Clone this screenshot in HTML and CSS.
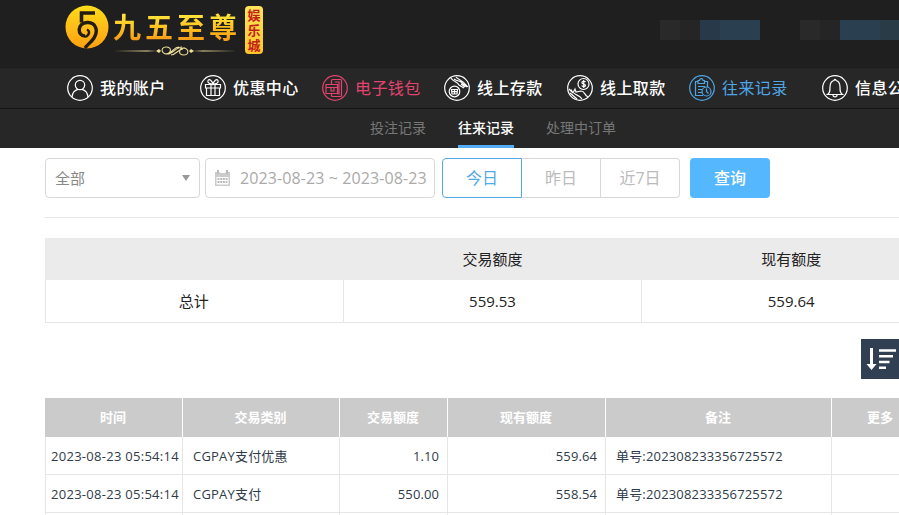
FILE: index.html
```html
<!DOCTYPE html>
<html lang="zh-CN">
<head>
<meta charset="utf-8">
<title>往来记录</title>
<link rel="stylesheet" href="styles.css">
</head>
<body>
<header class="top">
  <div class="logo">
    <svg class="coin" width="44" height="44" viewBox="0 0 44 44">
      <defs><linearGradient id="gold" x1="0" y1="0" x2="0" y2="1"><stop offset="0" stop-color="#ffdd18"/><stop offset=".5" stop-color="#ffbd18"/><stop offset="1" stop-color="#ffa010"/></linearGradient></defs>
      <circle cx="22" cy="22" r="21.5" fill="url(#gold)"/>
      <path d="M30 8H16.500V17.500" fill="none" stroke="#211d10" stroke-width="3.600"/>
      <path d="M20 31C12 31 12 18 22 17.500C32 17 33 27 29 33C26.500 37 23 39 20 43" fill="none" stroke="#211d10" stroke-width="3.400"/>
      <path d="M20 32C25 30 25 26 22 24.500" fill="none" stroke="#211d10" stroke-width="2.400"/>
    </svg>
    <div class="brand">
      <div class="brand-name">九五至尊</div>
      <svg class="flourish" width="124" height="10" viewBox="0 0 124 10" fill="none" stroke="#eedf9b">
        <path d="M0 5L34 4.4L44 5L34 5.6ZM124 5L90 4.4L80 5L90 5.6Z" fill="#eedf9b" stroke="none"/>
        <path d="M43 5l3-2 2 2-2 2zM81 5l-3-2-2 2 2 2z" fill="#eedf9b" stroke="none"/>
        <path d="M57 7C49 11 46 1 53 1C60 1 58 8 52 8M67 3C75-1 78 9 71 9C64 9 66 2 72 2M54 8C59 9 63 1 69 1M58 9C63 9 65 3 70 3M56 7C60 6 61 1 66 1" stroke-width="1.1"/>
      </svg>
    </div>
    <div class="badge"><span>娱</span><span>乐</span><span>城</span></div>
  </div>
  <div class="blurred">
    <i class="g"></i><i class="g2"></i><i class="b1"></i><i class="b2"></i>
    <i class="space"></i>
    <i class="g"></i><i class="g2"></i><i class="b2"></i><i class="b3"></i>
  </div>
</header>
<nav class="main-nav">
  <a class="item wide"><svg viewBox="0 0 26 26"><circle cx="13" cy="13" r="12.3"/><circle cx="13" cy="10" r="4.7"/><path d="M5 22C5.5 17 8 15 11 14.3M21 22C20.500 17 18 15 15 14.300"/></svg>我的账户</a>
  <a class="item"><svg viewBox="0 0 26 26"><circle cx="13" cy="13" r="12.300"/><path d="M5.500 9.500H20.500V13H5.500ZM6.500 13V20.500H19.500V13M11 9.500V20.500M15 9.500V20.500M13 9C10 9 7 8 8 5.500C9.500 3.500 12 5.500 13 9C14 5.500 16.500 3.500 18 5.500C19 8 16 9 13 9"/></svg>优惠中心</a>
  <a class="item pink"><svg viewBox="0 0 26 26"><circle cx="13" cy="13" r="12.300"/><path d="M9.500 9V5.500Q9.500 4.500 10.500 4.500H18.500Q19.500 4.500 19.500 5.500V20.500Q19.500 21.500 18.500 21.500H10.500Q9.500 21.500 9.500 20.500V19M4 9.500H15.500V18.500H4ZM4 12.500H15.500M9 12.500V16H12V12.500M13 7H17V19H15.500"/></svg>电子钱包</a>
  <a class="item third"><svg viewBox="0 0 26 26"><circle cx="13" cy="13" r="12.300"/><circle cx="10.500" cy="16.500" r="5.300"/><path d="M7.500 14.500H13.500L13 19H8ZM7.500 16.700H13.500M10.500 14.500V19M7 3C9 7 13 6 15 10L20 13M12 2C14 5 18 4 24 12M10 4C14 7 16 5 18 8L23 12M17 9L21 12"/></svg>线上存款</a>
  <a class="item"><svg viewBox="0 0 26 26"><circle cx="13" cy="13" r="12.300"/><circle cx="16.500" cy="9" r="5.500"/><path d="M18.500 7C17 5.500 14.500 6.500 15 8C15.500 9.500 18.500 8.500 18.500 10.500C18 12 15.500 12 14.700 10.500M16.700 5V13M2 14L6 18L4 14.500M6 18L8 14L9 17L14 16C18 16 17 20 21 22M7 18C9 21 12 19 15 24M3 18L10 24"/></svg>线上取款</a>
  <a class="item wide blue"><svg viewBox="0 0 26 26"><circle cx="13" cy="13" r="12.300"/><path d="M9 6.500H6.500V20.500H14M15 6.500H18.500V12M9 5.500H10.500C10.500 3 14 3 14 5.500H15.500V8.500H9ZM9 11.500H16M9 14.500H13M9 17.500H13"/><circle cx="17.500" cy="16.500" r="4.500"/><path d="M17.500 13.500V16.500L19.500 18.500"/></svg>往来记录</a>
  <a class="item last"><svg viewBox="0 0 26 26"><circle cx="13" cy="13" r="12.300"/><path d="M5.500 19.500C8 18 8 16 8 12C8 8 10 6 12 5.500C12 4 14 4 14 5.500C16 6 18 8 18 12C18 16 18 18 20.500 19.500ZM11 20C11 22.500 15 22.500 15 20"/></svg>信息公告</a>
</nav>
<nav class="sub-nav"><a>投注记录</a><a class="active">往来记录</a><a>处理中订单</a></nav>
<main>
  <div class="filters">
    <div class="select"><span>全部</span><i class="caret"></i></div>
    <div class="date">
      <svg width="17" height="17" viewBox="0 0 17 17"><path d="M1 2H16V16H1Z" fill="#ccc"/><path d="M2.500 7H14.500V14.500H2.500Z" fill="#fff"/><path d="M4 0V4M13 0V4" stroke="#bbb" stroke-width="2"/><path d="M3.500 9H13.500M3.500 12H13.500" stroke="#bbb" stroke-width="2" stroke-dasharray="2 .700"/><path d="M5.500 2.500H11.500" stroke="#fff"/></svg>
      <span>2023-08-23 ~ 2023-08-23</span>
    </div>
    <div class="range"><button class="on">今日</button><button>昨日</button><button>近7日</button></div>
    <button class="query">查询</button>
  </div>
  <table class="summary">
    <tr><th></th><th>交易额度</th><th>现有额度</th></tr>
    <tr><td class="label">总计</td><td>559.53</td><td>559.64</td></tr>
  </table>
  <div class="tools"><button class="sort"><svg width="40" height="40" viewBox="0 0 40 40"><path d="M9 9H12V25H15.500L10.500 31L5.500 25H9Z" fill="#fff"/><path d="M18 11.500H35M18 17.300H32M18 23H28.500M18 28.700H25" stroke="#fff" stroke-width="2.600"/></svg></button></div>
  <table class="records">
    <colgroup><col class="c-time"><col class="c-type"><col class="c-amount"><col class="c-balance"><col class="c-note"><col class="c-more"></colgroup>
    <thead><tr><th>时间</th><th>交易类别</th><th>交易额度</th><th>现有额度</th><th>备注</th><th>更多</th></tr></thead>
    <tbody>
      <tr><td class="time">2023-08-23 05:54:14</td><td class="type">CGPAY支付优惠</td><td class="num">1.10</td><td class="num">559.64</td><td class="note">单号:202308233356725572</td><td></td></tr>
      <tr><td class="time">2023-08-23 05:54:14</td><td class="type">CGPAY支付</td><td class="num">550.00</td><td class="num">558.54</td><td class="note">单号:202308233356725572</td><td></td></tr>
      <tr><td></td><td></td><td></td><td></td><td></td><td></td></tr>
    </tbody>
  </table>
</main>
</body>
</html>
```
FILE: styles.css
```css
* { box-sizing: border-box; }
html, body { height: 100%; overflow: hidden; }
body { margin: 0; background: #fff; color: #222; font-family: "Open Sans", "Noto Sans CJK SC", sans-serif; }
button { font-family: inherit; padding: 0; margin: 0; }

.top { height: 68px; background: #1f1f1f; display: flex; justify-content: space-between; padding-left: 65px; border-bottom: 1px solid #1c1c1c; }
.logo { display: flex; padding-top: 5px; }
.coin { display: block; }
.brand { margin-left: 4px; width: 128px; padding-top: 4px; }
.brand-name { font: 700 28px/34px "Noto Sans CJK SC", sans-serif; letter-spacing: 4px; white-space: nowrap; background: linear-gradient(#ffe23a 20%, #ffc21e 55%, #f59d18 90%); -webkit-background-clip: text; background-clip: text; color: transparent; }
.flourish { display: block; margin-top: 3px; }
.badge { width: 18px; height: 48px; margin: 1px 0 0 4px; padding-top: 1px; border-radius: 4px; background: linear-gradient(#ffe45c, #ffc629); color: #c3201c; font: 700 13px/15px "Noto Sans CJK SC", sans-serif; display: flex; flex-direction: column; align-items: center; }
.blurred { display: flex; width: 239px; margin-top: 20px; height: 20px; }
.blurred i { width: 20px; flex: none; }
.blurred .g { background: #292929; }
.blurred .g2 { background: #252525; }
.blurred .b1 { background: #283a49; }
.blurred .b2 { width: 40px; background: #2a4051; }
.blurred .b3 { background: #283b46; }
.blurred .space { width: 40px; }

.main-nav { height: 41px; background: #272727; border-bottom: 1px solid #161616; display: flex; padding-left: 67px; overflow: hidden; }
.item { flex: none; width: 122px; height: 40px; display: flex; align-items: center; gap: 7px; color: #fff; font-size: 16px; font-weight: 500; line-height: 40px; letter-spacing: .4px; white-space: nowrap; }
.item.wide { width: 133px; }
.item.third { width: 123px; }
.item svg { width: 26px; height: 26px; flex: none; fill: none; stroke: currentColor; stroke-width: 1.2; }
.item.pink { color: #e2446f; font-weight: 400; }
.item.blue { color: #4ea6e6; font-weight: 400; }

.sub-nav { height: 39px; background: #272727; display: flex; gap: 32px; padding-left: 370px; }
.sub-nav a { height: 39px; color: #777; font-size: 14px; line-height: 38px; }
.sub-nav .active { color: #fff; font-weight: 500; border-bottom: 3px solid #55aef5; }

main { width: 940px; height: 367px; overflow: hidden; padding-left: 45px; }
.filters { height: 70px; padding-top: 10px; border-bottom: 1px solid #e6e6e6; display: flex; }
.select, .date { height: 40px; border: 1px solid #d8d8d8; border-radius: 4px; display: flex; align-items: center; }
.select { width: 155px; padding: 0 9px 2px; justify-content: space-between; color: #888; font-size: 15px; }
.caret { margin-top: 2px; border: 4px solid transparent; border-top: 6px solid #999; border-bottom: 0; }
.date { width: 230px; margin-left: 5px; padding-left: 8px; gap: 9px; color: #aaa; font-size: 16px; letter-spacing: .1px; white-space: nowrap; }
.range { display: flex; width: 238px; margin-left: 7px; }
.range button { width: 79px; height: 40px; padding-bottom: 2px; border: 1px solid #d8d8d8; border-left: 0; background: #fff; color: #bbb; font-size: 16px; }
.range button:last-child { border-radius: 0 4px 4px 0; }
.range .on { width: 80px; border: 1px solid #53aae5; border-radius: 4px 0 0 4px; color: #53aae5; }
.query { width: 80px; height: 40px; margin-left: 10px; padding-bottom: 2px; border: 0; border-radius: 4px; background: #55b8ff; color: #fff; font-size: 16px; font-weight: 500; }

table { border-collapse: separate; border-spacing: 0; table-layout: fixed; }
.summary { width: 896px; margin-top: 20px; font-size: 15px; text-align: center; }
.summary th { height: 42px; padding: 0 1px 2px 0; background: #ebebeb; font-weight: 400; }
.summary td { height: 43px; padding: 0; border: solid #e6e6e6; border-width: 0 1px 1px 0; }
.summary td:first-child { border-left-width: 1px; }
.summary .label { padding: 0 1px 2px 0; }
.tools { height: 75px; padding: 16px 0 0 816px; }
.sort { display: block; width: 40px; height: 40px; border: 0; background: #303f51; }
.records { width: 885px; font-size: 13px; color: #2f3b49; white-space: nowrap; }
.records th { height: 39px; padding: 0 1px 2px 0; background: #cbcbcb; border-right: 1px solid #fff; color: #fff; font-weight: 700; text-align: center; }
.records td { height: 38px; padding: 0 8px 0 10px; border: solid #e6e6e6; border-width: 0 1px 1px 0; overflow: hidden; }
.records td:first-child { border-left-width: 1px; }
.records .time { padding: 0 0 0 5px; letter-spacing: .28px; }
.records .type { letter-spacing: .2px; }
.records .num { text-align: right; letter-spacing: .1px; }
.records .note { letter-spacing: .17px; }
.c-time { width: 138px; }
.c-type { width: 157px; }
.c-amount { width: 108px; }
.c-balance { width: 158px; }
.c-note { width: 226px; }
.c-more { width: 98px; }
```
